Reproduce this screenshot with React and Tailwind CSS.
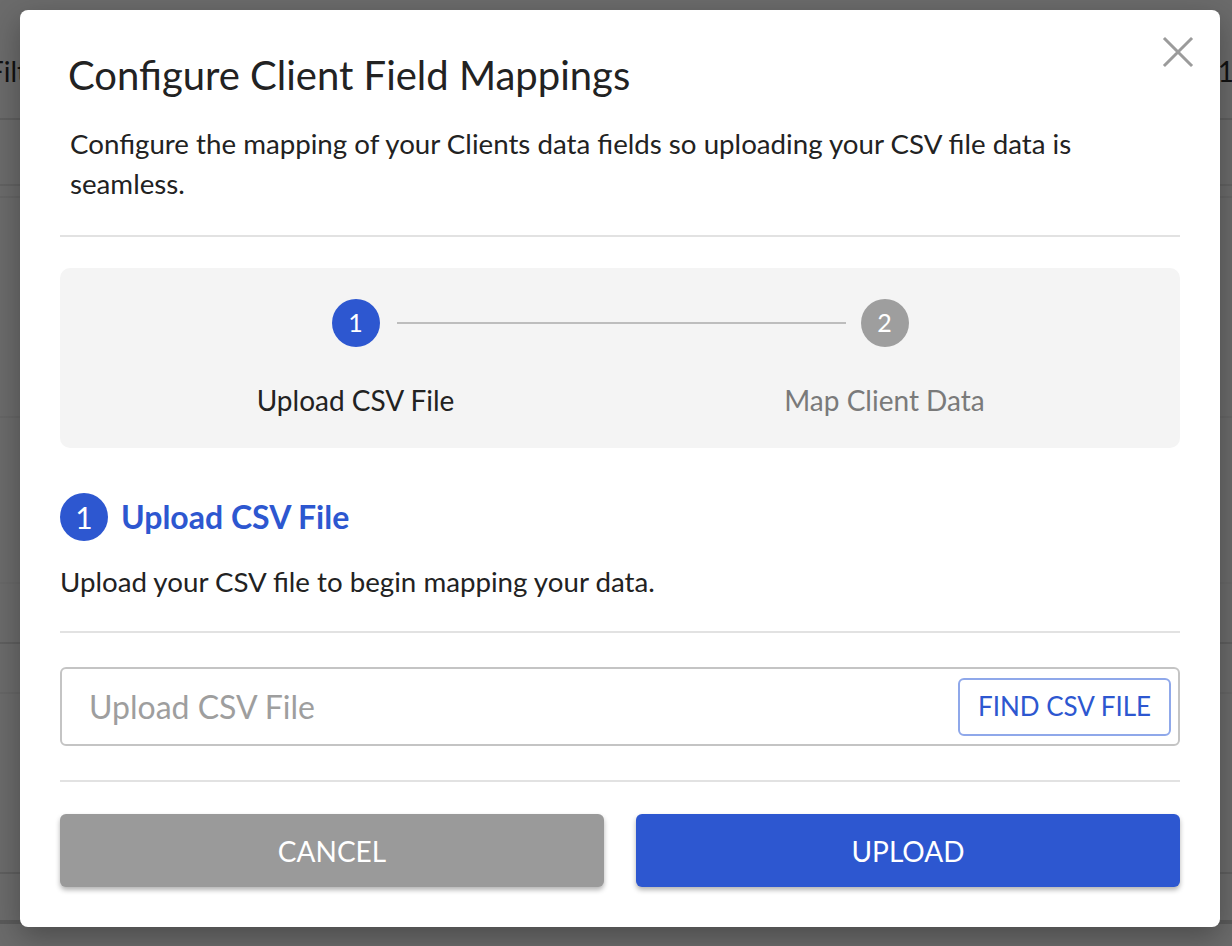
import React from 'react';

const font = { fontFamily: 'Lato, "Open Sans", "Liberation Sans", sans-serif' };

function CloseIcon() {
  return (
    <svg width="32" height="32" viewBox="0 0 32 32" fill="none" stroke="#9b9b9b" strokeWidth="3" strokeLinecap="square">
      <path d="M3 3 L29 29 M29 3 L3 29" />
    </svg>
  );
}

function Step({ n, label, active, first }) {
  return (
    <div className="relative flex flex-1 flex-col items-center">
      {!first && (
        <div className="absolute top-[23px] left-[calc(-50%+41px)] right-[calc(50%+39px)] h-[2px] bg-[#bdbdbd]" />
      )}
      <div
        className={`flex h-12 w-12 items-center justify-center rounded-full text-[25px] text-white ${
          active ? 'bg-[#2d57d0]' : 'bg-[#9e9e9e]'
        }`}
      >
        {n}
      </div>
      <div className={`mt-[38px] text-[28px] leading-[30px] ${active ? 'text-[#222]' : 'text-[#7a7a7a]'}`}>
        {label}
      </div>
    </div>
  );
}

export default function App() {
  return (
    <div className="relative h-[946px] w-[1232px] overflow-hidden bg-[#6b6b6b]" style={font}>
      {/* dimmed page behind the dialog */}
      <div className="flex flex-col">
        <div className="flex h-[120px] items-start justify-between border-b-2 border-[#5f5f5f] pt-[50px] text-[28px] text-[#111]">
          <span className="-ml-[12px]">Filt</span>
          <span className="-mr-[2px]">1</span>
        </div>
        <div className="h-[66px] border-b-2 border-[#626262]" />
        <div className="h-[12px] border-b-2 border-[#656565]" />
        <div className="h-[220px] border-b-2 border-[#666]" />
        <div className="h-[166px] border-b-2 border-[#686868]" />
        <div className="h-[60px] border-b-2 border-[#5f5f5f]" />
        <div className="h-[50px] border-b-2 border-[#666]" />
        <div className="h-[180px] border-b-2 border-[#5f5f5f]" />
        <div className="h-[50px] border-b-4 border-[#5a5a5a]" />
      </div>

      {/* dialog */}
      <div className="absolute left-[20px] top-[10px] w-[1200px] rounded-[8px] bg-white px-[40px] pt-[44px] pb-[40px] shadow-[0_10px_30px_rgba(0,0,0,0.3)]">
        <button className="absolute right-[26px] top-[26px]">
          <CloseIcon />
        </button>

        <div className="px-2">
          <h2 className="text-[40px] leading-[43px] text-[#222]">Configure Client Field Mappings</h2>
          <p className="mt-[27px] pl-[2px] pr-[60px] text-[27.7px] leading-[40px] text-[#222]">
            Configure the mapping of your Clients data fields so uploading your CSV file data is seamless.
          </p>
        </div>

        <div className="mt-[31px] h-[2px] bg-[#e2e2e2]" />

        <div className="mt-[31px] flex rounded-[10px] bg-[#f4f4f4] px-[31px] pt-[31px] pb-[33px]">
          <Step n="1" label="Upload CSV File" active first />
          <Step n="2" label="Map Client Data" />
        </div>

        <div className="mt-[45px] flex items-center gap-[13px]">
          <div className="flex h-12 w-12 items-center justify-center rounded-full bg-[#2d57d0] text-[30px] text-white">
            1
          </div>
          <div className="text-[32px] font-bold text-[#2d57d0]">Upload CSV File</div>
        </div>

        <p className="mt-[26px] text-[27.7px] leading-[30px] text-[#222]">Upload your CSV file to begin mapping your data.</p>

        <div className="mt-[34px] h-[2px] bg-[#e2e2e2]" />

        <div className="mt-[34px] flex h-[79px] items-center justify-between rounded-[6px] border-2 border-[#c4c4c4] pl-[27px] pr-[7px]">
          <span className="text-[32px] text-[#9e9e9e]">Upload CSV File</span>
          <button className="flex h-[58px] w-[213px] items-center justify-center rounded-[6px] border-2 border-[#8fa8ea] text-[26px] text-[#2d57d0]">
            FIND CSV FILE
          </button>
        </div>

        <div className="mt-[34px] h-[2px] bg-[#e2e2e2]" />

        <div className="mt-[32px] flex gap-[32px]">
          <button className="flex h-[73px] flex-1 items-center justify-center rounded-[6px] bg-[#9a9a9a] text-[28px] text-white shadow-[0_3px_5px_rgba(0,0,0,0.3)]">
            CANCEL
          </button>
          <button className="flex h-[73px] flex-1 items-center justify-center rounded-[6px] bg-[#2d57d0] text-[28px] text-white shadow-[0_3px_5px_rgba(0,0,0,0.3)]">
            UPLOAD
          </button>
        </div>
      </div>
    </div>
  );
}
